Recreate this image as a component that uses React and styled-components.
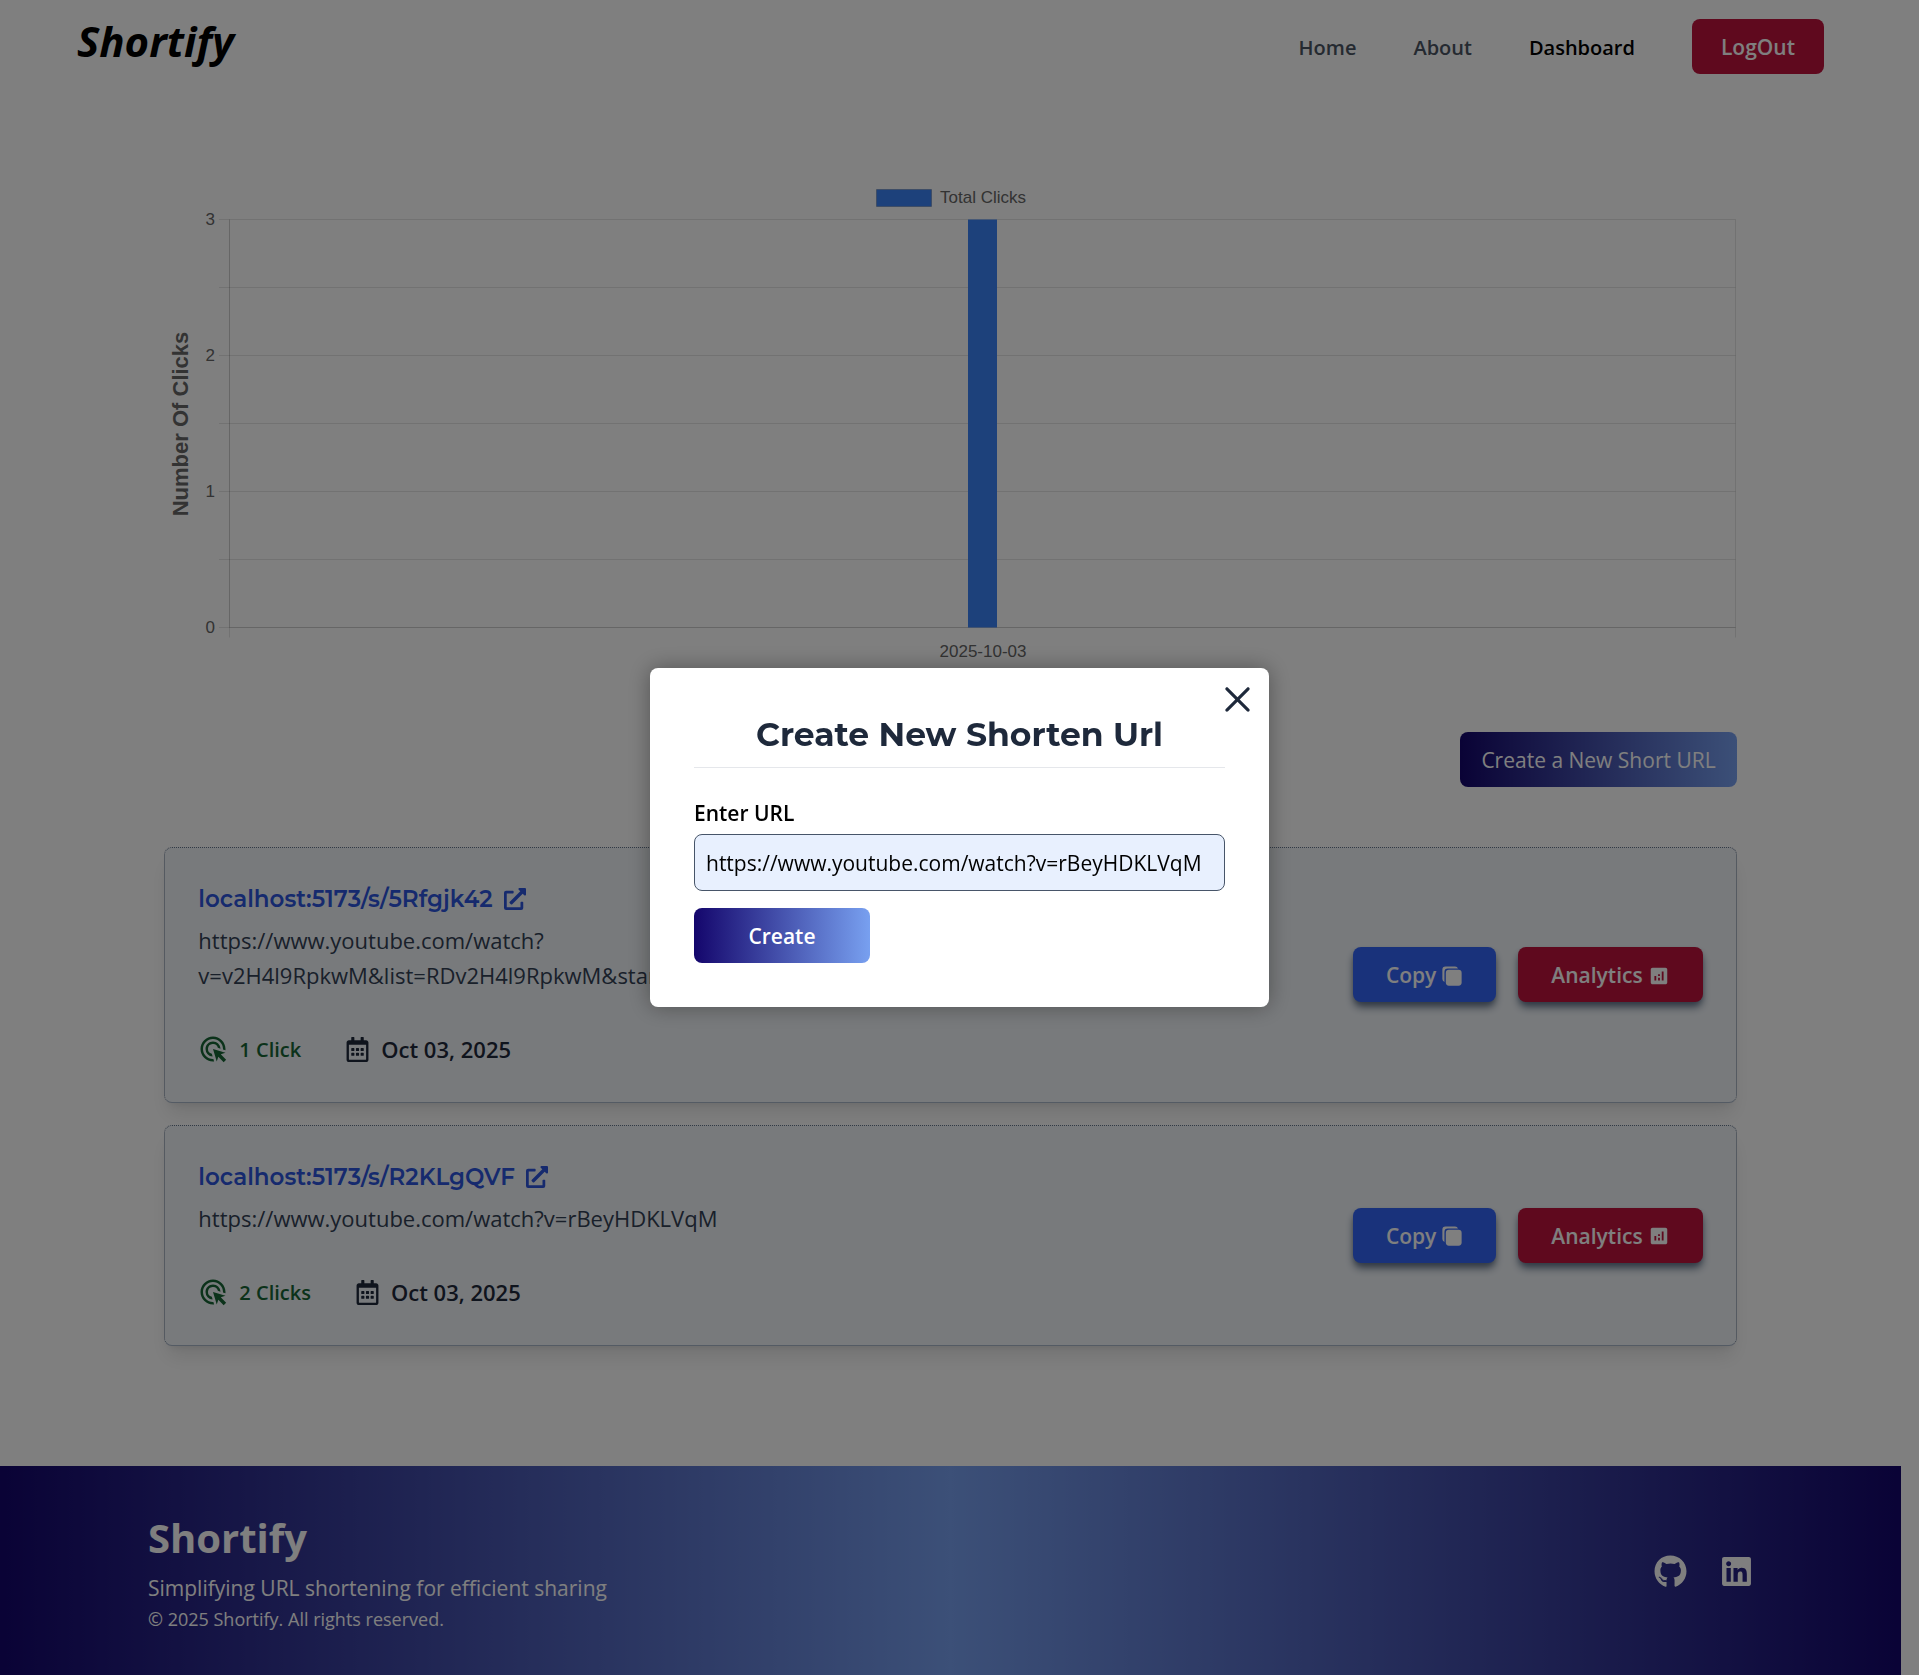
import React, { useLayoutEffect, useRef, useState } from "react";
import styled, { createGlobalStyle } from "styled-components";
import { FaExternalLinkAlt, FaGithub, FaLinkedin, FaRegCalendarAlt } from "react-icons/fa";
import { MdAnalytics, MdOutlineAdsClick } from "react-icons/md";
import { IoCopy } from "react-icons/io5";
import { RxCross2 } from "react-icons/rx";

const sans = `"Segoe UI", "Open Sans", "Noto Sans", sans-serif`;
const display = `Montserrat, Inter, sans-serif`;
const brandGradient = "linear-gradient(to right, #14066c, #78a0f0)";

const GlobalStyle = createGlobalStyle`
  *, *::before, *::after { box-sizing: border-box; }
  body {
    margin: 0;
    padding-right: 18px;
    background: #fff;
    font-family: ${sans};
    font-size: 21px;
    line-height: 33px;
    color: #000;
  }
  h1, p { margin: 0; padding: 0; }
  a { color: inherit; text-decoration: none; }
  svg { display: block; flex: none; }
`;

const Header = styled.header`
  display: flex;
  align-items: center;
  justify-content: space-between;
  height: 93px;
  padding: 0 77px;
`;

const HeaderLogo = styled.a`
  padding-bottom: 12px;
  font-size: 42px;
  line-height: 50px;
  font-weight: 700;
  font-style: italic;
`;

const Nav = styled.nav`
  display: flex;
  align-items: center;
  gap: 57px;
`;

const NavLink = styled.a`
  padding-top: 2px;
  font-size: 20px;
  font-weight: 600;
  color: ${(p) => (p.$active ? "#000" : "#4b5563")};
`;

const Button = styled.button`
  display: inline-flex;
  align-items: center;
  justify-content: center;
  gap: 5px;
  height: 55px;
  min-width: ${(p) => p.$min || 0}px;
  padding: 2px ${(p) => p.$pad || 21}px 0;
  border: 0;
  border-radius: 8px;
  background: ${(p) => p.$bg || brandGradient};
  box-shadow: ${(p) => (p.$raised ? "0 6px 8px -1px #64748b, 0 3px 6px -3px #64748b" : "none")};
  color: #fff;
  font-family: inherit;
  font-size: 21px;
  line-height: 33px;
  font-weight: ${(p) => p.$weight || 400};
  white-space: nowrap;
  cursor: pointer;
`;

const Dashboard = styled.div`
  padding: 0 77px;
`;

const Main = styled.main`
  width: 90%;
  margin: 0 auto;
  padding: 83px 0 120px;
`;

const ChartBox = styled.div`
  height: 490px;
  svg { width: 100%; height: 100%; }
  text { font-family: "Liberation Sans", Arial, sans-serif; font-size: 17px; fill: #666; }
  .axis-title { font-size: 22px; font-weight: 700; }
`;

const Actions = styled.div`
  display: flex;
  justify-content: flex-end;
  padding: 66px 0 60px;
`;

const List = styled.div`
  display: flex;
  flex-direction: column;
  gap: 22px;
`;

const Card = styled.article`
  display: flex;
  align-items: center;
  justify-content: space-between;
  gap: 22px;
  padding: 33px 33px 34px;
  background: #f1f5f9;
  border: 1px dotted #64748b;
  border-bottom: 1px solid #a9b6c9;
  border-radius: 8px;
  box-shadow: 0 14px 20px -4px rgba(0, 0, 0, 0.1), 0 6px 8px -6px rgba(0, 0, 0, 0.1);
`;

const CardText = styled.div`
  max-width: 540px;
`;

const ShortLink = styled.a`
  display: flex;
  align-items: center;
  gap: 11px;
  width: max-content;
  height: 36px;
  margin-bottom: 6px;
  font-family: ${display};
  font-size: 23px;
  font-weight: 600;
  color: #2d55dc;
`;

const LongUrl = styled.p`
  font-size: 22px;
  line-height: 35px;
  color: #334155;
`;

const Meta = styled.div`
  display: flex;
  align-items: center;
  gap: 44px;
  height: 38px;
  margin-top: 37px;
`;

const MetaItem = styled.span`
  display: flex;
  align-items: center;
  gap: 11px;
  font-weight: 600;
  font-size: ${(p) => p.$size}px;
  color: ${(p) => p.$color};
`;

const CardButtons = styled.div`
  display: flex;
  gap: 22px;
`;

const Footer = styled.footer`
  display: flex;
  align-items: center;
  justify-content: space-between;
  padding: 44px 148px 42px;
  background: linear-gradient(to right, #14066c, #78a0f0, #14066c);
  color: #fff;
`;

const FooterLogo = styled.p`
  margin-bottom: 6px;
  font-size: 40px;
  line-height: 56px;
  font-weight: 700;
`;

const Copyright = styled.p`
  font-size: 18px;
  line-height: 28px;
`;

const Socials = styled.div`
  display: flex;
  gap: 33px;
`;

const Overlay = styled.div`
  position: fixed;
  inset: 0;
  display: flex;
  align-items: center;
  justify-content: center;
  background: rgba(0, 0, 0, 0.5);
`;

const Modal = styled.form`
  position: relative;
  display: flex;
  flex-direction: column;
  align-items: flex-start;
  width: 619px;
  padding: 44px;
  background: #fff;
  border-radius: 8px;
  box-shadow: 0 0 22px rgba(0, 0, 0, 0.35);
`;

const ModalTitle = styled.h1`
  width: 100%;
  padding-bottom: 11px;
  border-bottom: 1px solid #e5e7eb;
  text-align: center;
  font-family: ${display};
  font-size: 33px;
  line-height: 44px;
  font-weight: 700;
  color: #1e293b;
`;

const Label = styled.label`
  margin-top: 29px;
  font-weight: 600;
`;

const UrlInput = styled.input`
  width: 100%;
  height: 57px;
  margin: 4px 0 17px;
  padding: 0 11px;
  border: 1px solid #475569;
  border-radius: 8px;
  background: #e8f0fe;
  font-family: inherit;
  font-size: 21px;
  color: #000;
  outline: none;
`;

const CloseButton = styled.button`
  position: absolute;
  top: 11px;
  right: 11px;
  padding: 0;
  border: 0;
  background: none;
  color: #1e293b;
  cursor: pointer;
`;

const links = [
  {
    slug: "5Rfgjk42",
    url: "https://www.youtube.com/watch?v=v2H4l9RpkwM&list=RDv2H4l9RpkwM&start_radio",
    clicks: 1,
    date: "Oct 03, 2025",
  },
  {
    slug: "R2KLgQVF",
    url: "https://www.youtube.com/watch?v=rBeyHDKLVqM",
    clicks: 2,
    date: "Oct 03, 2025",
  },
];

const plot = { left: 65.5, top: 43.5, bottom: 451.5, max: 3 };

function ClicksChart({ label, value }) {
  const box = useRef(null);
  const [width, setWidth] = useState(1200);

  useLayoutEffect(() => {
    const measure = () => setWidth(Math.round(box.current.clientWidth));
    measure();
    const observer = new ResizeObserver(measure);
    observer.observe(box.current);
    return () => observer.disconnect();
  }, []);

  const right = width - 0.5;
  const center = Math.round((plot.left + right) / 2);
  const yOf = (v) => plot.bottom - ((plot.bottom - plot.top) * v) / plot.max;
  const steps = [0, 0.5, 1, 1.5, 2, 2.5, 3];
  const legendX = Math.round(width / 2) - 74;
  const barTop = yOf(value);

  return (
    <ChartBox ref={box}>
      <svg role="img" aria-label="Total clicks by day">
        <rect x={legendX + 0.5} y="13.5" width="55" height="17" fill="#3b82f6" stroke="rgba(29,41,72,.25)" />
        <text x={legendX + 64} y="27">Total Clicks</text>
        {steps.map((s) => (
          <g key={s}>
            <line x1="55" x2={right} y1={yOf(s)} y2={yOf(s)} stroke="rgba(0,0,0,.1)" />
            {Number.isInteger(s) && (
              <text x="51" y={yOf(s) + 5} textAnchor="end">{s}</text>
            )}
          </g>
        ))}
        <line x1={plot.left} x2={plot.left} y1={plot.top} y2={plot.bottom + 10} stroke="rgba(0,0,0,.1)" />
        <line x1={plot.left} x2={plot.left} y1={plot.top} y2={plot.bottom} stroke="rgba(0,0,0,.1)" />
        <line x1={right} x2={right} y1={plot.top} y2={plot.bottom + 10} stroke="rgba(0,0,0,.1)" />
        <line x1={plot.left} x2={right} y1={plot.bottom} y2={plot.bottom} stroke="rgba(0,0,0,.1)" />
        <rect x={center - 15} y={barTop} width="29" height={plot.bottom - barTop} fill="#3b82f6" />
        <text x={center} y="481" textAnchor="middle">{label}</text>
        <text className="axis-title" transform="translate(24 248) rotate(-90)" textAnchor="middle">
          Number Of Clicks
        </text>
      </svg>
    </ChartBox>
  );
}

function LinkCard({ link }) {
  return (
    <Card>
      <CardText>
        <ShortLink href={`/s/${link.slug}`}>
          localhost:5173/s/{link.slug}
          <FaExternalLinkAlt size={22} />
        </ShortLink>
        <LongUrl>{link.url}</LongUrl>
        <Meta>
          <MetaItem $color="#166534" $size={20}>
            <MdOutlineAdsClick size={30} />
            {link.clicks} {link.clicks === 1 ? "Click" : "Clicks"}
          </MetaItem>
          <MetaItem $color="#1e293b" $size={22}>
            <FaRegCalendarAlt size={25} />
            {link.date}
          </MetaItem>
        </Meta>
      </CardText>
      <CardButtons>
        <Button type="button" $bg="#3364f7" $pad={33} $weight={600} $raised>
          Copy <IoCopy size={22} />
        </Button>
        <Button type="button" $bg="#be123c" $pad={33} $weight={600} $raised>
          Analytics <MdAnalytics size={22} />
        </Button>
      </CardButtons>
    </Card>
  );
}

export default function App() {
  const [open, setOpen] = useState(true);
  const [url, setUrl] = useState("https://www.youtube.com/watch?v=rBeyHDKLVqM");
  const close = () => setOpen(false);

  return (
    <>
      <GlobalStyle />
      <Header>
        <HeaderLogo href="/">Shortify</HeaderLogo>
        <Nav>
          <NavLink href="/">Home</NavLink>
          <NavLink href="/about">About</NavLink>
          <NavLink href="/dashboard" $active>Dashboard</NavLink>
          <Button type="button" $bg="#be123c" $pad={29} $weight={600}>LogOut</Button>
        </Nav>
      </Header>

      <Dashboard>
        <Main>
          <ClicksChart label="2025-10-03" value={3} />
          <Actions>
            <Button type="button" onClick={() => setOpen(true)}>Create a New Short URL</Button>
          </Actions>
          <List>
            {links.map((link) => (
              <LinkCard key={link.slug} link={link} />
            ))}
          </List>
        </Main>
      </Dashboard>

      <Footer>
        <div>
          <FooterLogo>Shortify</FooterLogo>
          <p>Simplifying URL shortening for efficient sharing</p>
          <Copyright>© 2025 Shortify. All rights reserved.</Copyright>
        </div>
        <Socials>
          <a href="https://github.com" aria-label="GitHub"><FaGithub size={33} /></a>
          <a href="https://linkedin.com" aria-label="LinkedIn"><FaLinkedin size={33} /></a>
        </Socials>
      </Footer>

      {open && (
        <Overlay>
          <Modal role="dialog" aria-labelledby="create-title" onSubmit={(e) => e.preventDefault()}>
            <ModalTitle id="create-title">Create New Shorten Url</ModalTitle>
            <Label htmlFor="target-url">Enter URL</Label>
            <UrlInput
              id="target-url"
              type="text"
              value={url}
              onChange={(e) => setUrl(e.target.value)}
            />
            <Button type="submit" $weight={600} $min={176}>Create</Button>
            <CloseButton type="button" aria-label="Close" onClick={close}>
              <RxCross2 size={41} />
            </CloseButton>
          </Modal>
        </Overlay>
      )}
    </>
  );
}
